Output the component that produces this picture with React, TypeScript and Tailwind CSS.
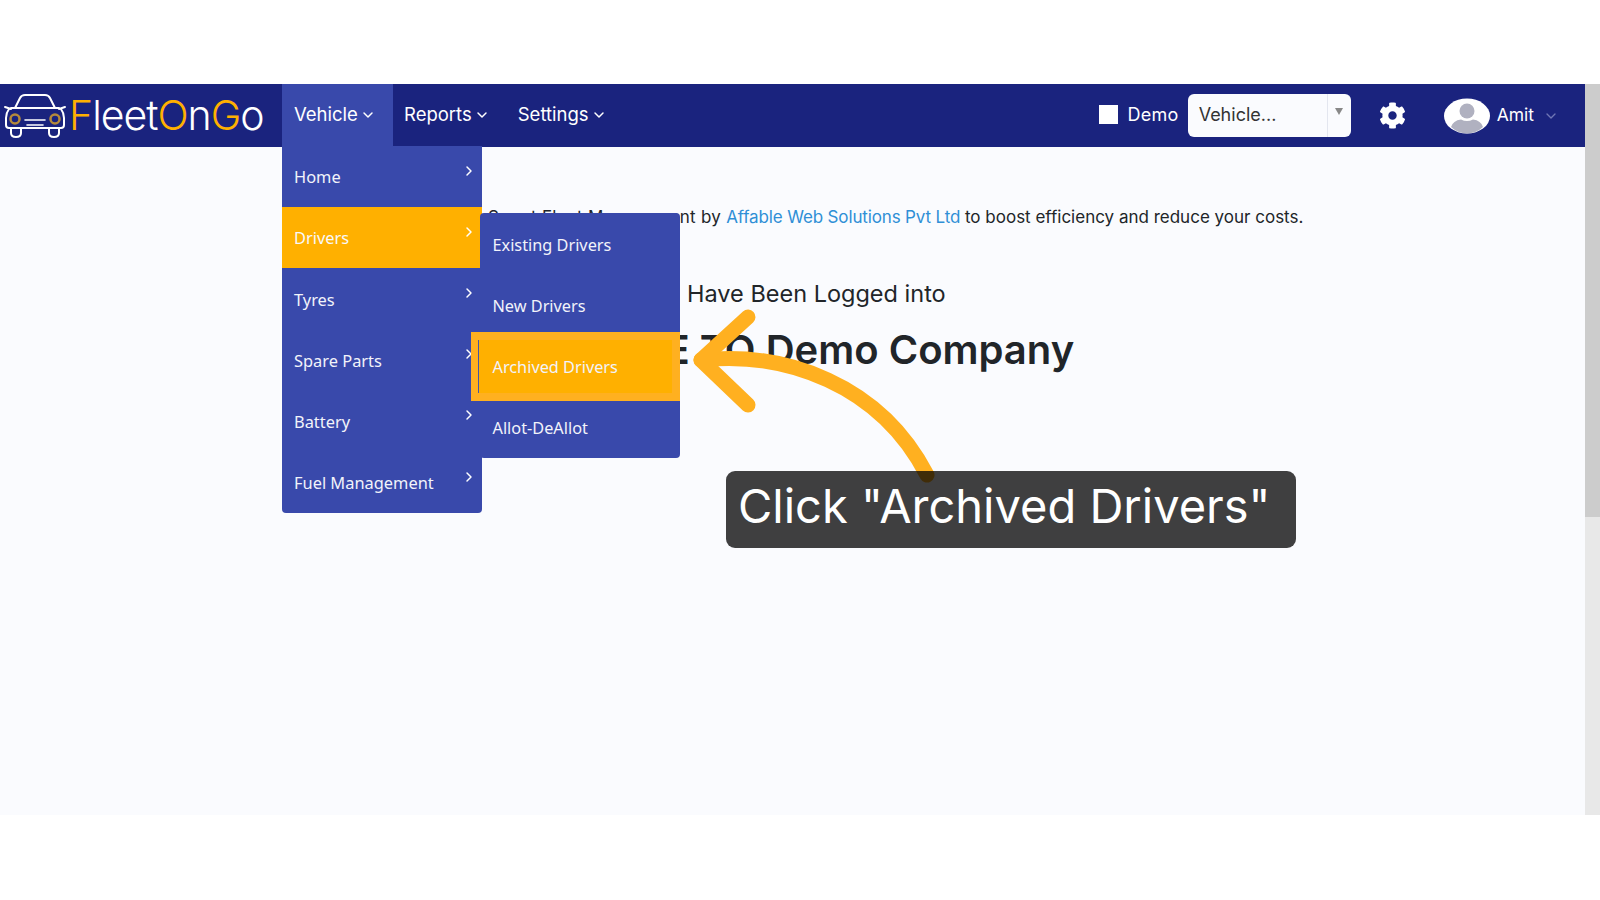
import { ChevronDown, ChevronRight } from "lucide-react";
import { FaCog } from "react-icons/fa";

function CarLogo() {
  return (
    <svg width="62" height="46" viewBox="0 0 62 46" fill="none" stroke="#fff" strokeWidth="2" strokeLinecap="round" strokeLinejoin="round" className="shrink-0">
      <path d="M11 15 L16 5 Q17.500 2 21 2 H41 Q44.500 2 46 5 L51 15" />
      <path d="M7 15 H55" />
      <path d="M5 16 Q2 20 2 25 V32 Q2 35 5 35 H57 Q60 35 60 32 V25 Q60 20 57 16" />
      <path d="M1 14 L7 16 M61 14 L55 16" />
      <path d="M7 35 V40 Q7 44 12 44 Q17 44 17 40 V35 M45 35 V40 Q45 44 50 44 Q55 44 55 40 V35" />
      <path d="M21 27 H41 M23 32 H39" strokeWidth="1.600" />
      <circle cx="11" cy="26" r="4.500" stroke="#b58a3c" strokeWidth="2.500" />
      <circle cx="51" cy="26" r="4.500" stroke="#b58a3c" strokeWidth="2.500" />
    </svg>
  );
}

function Avatar() {
  return (
    <svg width="46" height="36" viewBox="0 0 46 36" className="shrink-0">
      <ellipse cx="23" cy="18" rx="23" ry="17.500" fill="#fff" />
      <circle cx="23" cy="13" r="7.500" fill="#b0b1c0" />
      <path d="M7 29 Q9 22.500 17 21.500 Q23 24.500 29 21.500 Q37 22.500 39 29 Q32 35.500 23 35.500 Q14 35.500 7 29 Z" fill="#b0b1c0" />
    </svg>
  );
}

const mainItems = ["Home", "Drivers", "Tyres", "Spare Parts", "Battery", "Fuel Management"];
const subItems = ["Existing Drivers", "New Drivers", "Archived Drivers", "Allot-DeAllot"];

function SubMenu() {
  return (
    <div className="absolute left-[198px] top-[6px] z-20 w-[200px] rounded-[4px] bg-[#3949ab]">
      {subItems.map((s) => (
        <div key={s} className="relative flex h-[61.250px] items-center pl-[12.500px] text-[16.300px] text-[#f2f3fa]">
          {s === "Archived Drivers" && (
            <div className="absolute left-[-9px] right-0 top-[-4px] bottom-[-4px] border-[8px] border-[#ffb020] bg-[#ffb000]">
              <div className="absolute left-[-1px] top-0 bottom-0 w-[1px] bg-[#4a55a0]" />
            </div>
          )}
          <span className="relative pt-[2px]">{s}</span>
        </div>
      ))}
    </div>
  );
}

function Dropdown() {
  return (
    <div className="absolute left-0 top-full z-10 w-[200px] rounded-b-[4px] bg-[#3949ab] font-['Noto_Sans',sans-serif]">
      {mainItems.map((m) => (
        <div
          key={m}
          className={
            m === "Drivers"
              ? "relative flex h-[61.200px] items-center justify-between bg-[#ffb000] pl-3 pr-[5px] text-[16.400px] text-[#f8f8fb]"
              : "relative flex h-[61.200px] items-center justify-between pl-3 pr-[5px] text-[16.400px] text-[#f2f3fa]"
          }
        >
          <span className="pt-[2px]">{m}</span>
          <ChevronRight size={16} strokeWidth={2.200} className="mb-3 text-white" />
          {m === "Drivers" && <SubMenu />}
        </div>
      ))}
    </div>
  );
}

export default function App() {
  return (
    <div className="flex h-[900px] w-[1600px] flex-col overflow-hidden bg-white pt-[84px] font-['Inter',sans-serif]">
      <div className="flex h-[731px]">
        <div className="relative flex w-[1585px] flex-col bg-[#fafbfe]">
          <nav className="flex h-[63px] shrink-0 bg-[#1a237e] text-white">
            <div className="flex w-[282px] items-center gap-[3px] pl-[4px]">
              <CarLogo />
              <div className="text-[41px] font-light leading-none tracking-[-1px]">
                <span className="text-[#ffb000]">F</span>leet<span className="text-[#ffb000]">O</span>n<span className="text-[#ffb000]">G</span>o
              </div>
            </div>
            <div className="relative flex h-[62px] w-[111px] items-center gap-[2px] bg-[#3949ab] pb-[1px] pl-3 text-[18.500px]">
              Vehicle <ChevronDown size={16} strokeWidth={2.200} />
              <Dropdown />
            </div>
            <div className="flex items-center gap-[2px] pb-[1px] pl-[11px] text-[18.500px]">
              Reports <ChevronDown size={16} strokeWidth={2.200} />
            </div>
            <div className="flex items-center gap-[2px] pb-[1px] pl-[28px] text-[18.500px]">
              Settings <ChevronDown size={16} strokeWidth={2.200} />
            </div>
            <div className="ml-auto flex items-center pr-[26px]">
              <div className="mb-[3px] h-[19px] w-[19px] bg-white" />
              <span className="mb-[3px] ml-[9px] text-[18px] tracking-[0.3px]">Demo</span>
              <div className="ml-[9px] flex h-[43px] w-[163px] items-center justify-between rounded-[6px] bg-[#fafbfe] text-[18px] text-[#333]">
                <span className="pb-[3px] pl-[11px]">Vehicle...</span>
                <div className="flex h-full w-[24px] justify-center border-l border-[#e3e6ef] pt-[14px]">
                  <div className="h-0 w-0 border-x-[4px] border-t-[7px] border-x-transparent border-t-[#888]" />
                </div>
              </div>
              <FaCog size={27} className="ml-[28px] text-white" />
              <div className="ml-[38px]"><Avatar /></div>
              <span className="mb-[1px] ml-[7px] text-[17.500px]">Amit</span>
              <ChevronDown size={16} className="ml-[9px] text-[#6f76b5]" />
            </div>
          </nav>
          <main className="flex flex-1 flex-col pl-[47px] text-[#212529]">
            <p className="ml-[441px] mt-[57px] h-[26px] whitespace-nowrap text-[17px] leading-[26px]">
              <span className="tracking-[0.27px]">Smart Fleet Management by </span>
              <span className="tracking-[-0.14px] text-[#2f8fd6]">Affable Web Solutions Pvt Ltd</span> to boost efficiency and reduce your costs.
            </p>
            <h3 className="mt-[48px] pr-[48px] text-center text-[23.500px] leading-[32px]">You Have Been Logged into</h3>
            <h2 className="mt-[16px] pr-[76px] text-center text-[40px] font-semibold leading-[48px]">WELCOME TO Demo Company</h2>
          </main>
          <svg width="260" height="190" viewBox="0 0 260 190" fill="none" stroke="#ffb020" strokeWidth="15" strokeLinecap="round" strokeLinejoin="round" className="pointer-events-none absolute left-[680px] top-[215px] z-30">
            <path d="M21 61 C105 52 200 85 247 176" />
            <path d="M68 18 L21 61 L68 106" />
          </svg>
          <div className="absolute left-[726px] top-[387px] z-30 flex h-[77px] w-[570px] items-center rounded-[9px] bg-black/75 pb-[6px] pl-[12px] text-[47px] text-white">
            Click "Archived Drivers"
          </div>
        </div>
        <div className="w-[15px] bg-[#e8e8e8]">
          <div className="h-[433px] bg-[#cccccc]" />
        </div>
      </div>
    </div>
  );
}
